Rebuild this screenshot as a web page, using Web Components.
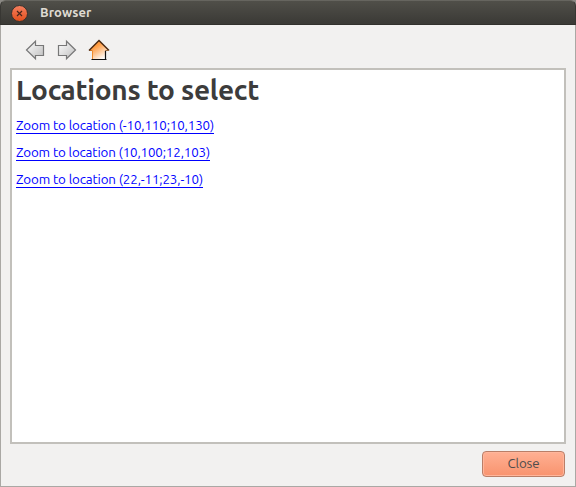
<!DOCTYPE html>
<html lang="en"><head><meta charset="utf-8"><title>Browser</title>
<style>html,body{margin:0;height:100%;overflow:hidden;background:#8b8984}body{font-family:Ubuntu,"Noto Sans",sans-serif;font-size:13.33px;color:#3c3c3c}</style></head>
<body><browser-window></browser-window>
<script>
function define(name, html, ready) {
  const t = document.createElement('template');
  t.innerHTML = html;
  customElements.define(name, class extends HTMLElement {
    connectedCallback() {
      if (this.shadowRoot) return;
      this.attachShadow({mode: 'open'}).append(t.content.cloneNode(true));
      if (ready) ready(this);
    }
  });
}
// Text whose tracking is adjusted to fill the width given in its attribute.
define('fit-text', `<style>:host{display:inline-block;white-space:nowrap}</style><slot></slot>`, el => {
  const goal = +el.getAttribute('width');
  const natural = el.getBoundingClientRect().width;
  el.style.letterSpacing = ((goal - natural) / el.textContent.length) + 'px';
  el.style.width = goal + 'px';
});
define('title-bar', `<style>
:host{display:flex;align-items:center;gap:11px;height:25px;box-sizing:border-box;padding:0 0 0 11px;border-radius:6px 6px 0 0;background:linear-gradient(#504f49,#3c3b37 92%);border:1px solid #383733;border-top-color:#66655f;border-bottom-color:#32312d;color:#dfdbd2;font-weight:700;font-size:13px;line-height:18px}
svg{display:block;flex:none;margin:2px 0 0 -1px}fit-text{margin-top:-1px}
</style><svg width="18" height="18" viewBox="0 0 18 18"><defs><linearGradient id="g" x2="0" y2="1"><stop stop-color="#f58060"/><stop offset="1" stop-color="#e14e1b"/></linearGradient></defs><circle cx="8.5" cy="8.5" r="8" fill="url(#g)" stroke="#35322d" stroke-width="1"/><path d="M6 6l5 5M11 6l-5 5" stroke="#45261b" stroke-width="1.2"/></svg><fit-text width="51.5">Browser</fit-text>`);
define('nav-bar', `<style>:host{display:flex;gap:10px;padding:13px 0 0 23px;height:43px;box-sizing:border-box}svg{display:block}</style>
<svg width="22" height="24" viewBox="0 0 22 24"><defs><linearGradient id="a" x2="1" y2="1"><stop stop-color="#fff"/><stop offset="1" stop-color="#bdbdbd"/></linearGradient></defs><path d="M2.5 12L11.5 3.2V7.5H19.5V17.5H11.5V20.8Z" fill="url(#a)" stroke="#777" stroke-width="1.2"/></svg>
<svg width="22" height="24" viewBox="0 0 22 24"><defs><linearGradient id="b" x2="1" y2="1"><stop stop-color="#fff"/><stop offset="1" stop-color="#bdbdbd"/></linearGradient></defs><path d="M19.5 12L10.5 3.2V7.5H2.5V17.5H10.5V20.8Z" fill="url(#b)" stroke="#777" stroke-width="1.2"/></svg>
<svg width="24" height="24" viewBox="0 0 24 24"><defs><linearGradient id="h" gradientUnits="userSpaceOnUse" x1="6" y1="6" x2="15" y2="21"><stop offset=".15" stop-color="#ff9a3e"/><stop offset="1" stop-color="#fff"/></linearGradient></defs><path d="M11 2.5L1 12.5H4.5V21.5H17.5V12.5H21Z" fill="url(#h)"/><path d="M4.5 13V21" stroke="#f08a2c"/><path d="M4.5 12.5H1.5" stroke="#d77620"/><path d="M1 12.5L11 2.5L21 12.5" fill="none" stroke="#4b2a12" stroke-width="1.5"/><path d="M21 12.5H17.5V21" fill="none" stroke="#9a6a3f"/><path d="M17.5 13V21.5M3.5 21.5H18.5" fill="none" stroke="#111" stroke-width="1.2"/></svg>`);
define('page-view', `<style>:host{display:block;flex:1;box-sizing:border-box;margin:0 9px;border:2px solid #c2c0bb;background:#fff;padding:3px 4px 0}h1{margin:0;height:44px;font-size:28px;line-height:34px;font-weight:700}a{display:block;width:max-content;height:16px;line-height:18px;margin-bottom:10px;color:#00f;border-bottom:1px solid #00f;text-decoration:none}fit-text{vertical-align:top}</style>
<h1><fit-text width="243">Locations to select</fit-text></h1>
<a href="#"><fit-text width="198">Zoom to location (-10,110;10,130)</fit-text></a>
<a href="#"><fit-text width="194">Zoom to location (10,100;12,103)</fit-text></a>
<a href="#"><fit-text width="187">Zoom to location (22,-11;23,-10)</fit-text></a>`);
define('push-button', `<style>:host{display:block}button{box-sizing:border-box;display:block;width:83px;height:26px;padding:0;border:1px solid #ba7e67;border-radius:4px;background:linear-gradient(#ffb093,#f8936e);box-shadow:inset 0 0 0 1px #ffb69b;color:#4c4c4c;font:inherit;line-height:22px}</style><button><slot></slot></button>`);
define('browser-window', `<style>:host{display:flex;flex-direction:column;width:576px;height:487px}main{flex:1;display:flex;flex-direction:column;background:#f2f1f0;border:1px solid #aaa8a4;border-top:0}footer{display:flex;justify-content:flex-end;height:42px;box-sizing:border-box;padding:7px 10px 0}</style>
<title-bar></title-bar><main><nav-bar></nav-bar><page-view></page-view><footer><push-button><fit-text width="32">Close</fit-text></push-button></footer></main>`);
</script></body></html>
